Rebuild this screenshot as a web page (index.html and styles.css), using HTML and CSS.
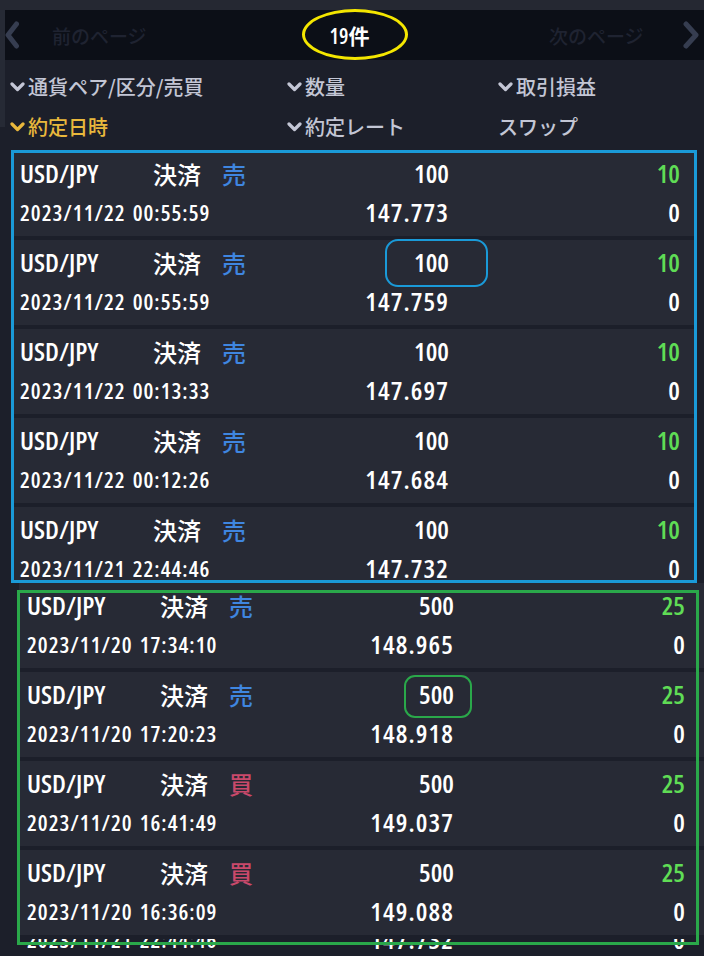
FILE: index.html
```html
<!DOCTYPE html>
<html lang="ja">
<head>
<meta charset="utf-8">
<title>約定履歴</title>
<link rel="stylesheet" href="styles.css">
</head>
<body>
<div class="page">
  <div class="topstrip"></div>
  <nav class="pager">
    <span class="chev"><svg width="14" height="28" viewBox="0 0 14 28"><polyline points="11.5,3 3,14 11.5,25" fill="none" stroke="#363d50" stroke-width="5" stroke-linejoin="round" stroke-linecap="round"/></svg></span>
    <span class="prev">前のページ</span>
    <span class="count">19件</span>
    <span></span>
    <span class="next">次のページ</span>
    <span class="chev"><svg width="18" height="28" viewBox="0 0 18 28"><polyline points="4,3 14,14 4,25" fill="none" stroke="#363d50" stroke-width="5" stroke-linejoin="round" stroke-linecap="round"/></svg></span>
  </nav>

  <div class="heads">
    <div class="h"><svg class="dn" width="15" height="10" viewBox="0 0 15 10"><polyline points="2,2 7.5,7.5 13,2" fill="none" stroke="currentColor" stroke-width="3.2" stroke-linecap="round" stroke-linejoin="round"/></svg>通貨ペア/区分/売買</div>
    <div class="h"><svg class="dn" width="15" height="10" viewBox="0 0 15 10"><polyline points="2,2 7.5,7.5 13,2" fill="none" stroke="currentColor" stroke-width="3.2" stroke-linecap="round" stroke-linejoin="round"/></svg>数量</div>
    <div class="h"><svg class="dn" width="15" height="10" viewBox="0 0 15 10"><polyline points="2,2 7.5,7.5 13,2" fill="none" stroke="currentColor" stroke-width="3.2" stroke-linecap="round" stroke-linejoin="round"/></svg>取引損益</div>
    <div class="h active"><svg class="dn" width="15" height="10" viewBox="0 0 15 10"><polyline points="2,2 7.5,7.5 13,2" fill="none" stroke="currentColor" stroke-width="3.2" stroke-linecap="round" stroke-linejoin="round"/></svg>約定日時</div>
    <div class="h"><svg class="dn" width="15" height="10" viewBox="0 0 15 10"><polyline points="2,2 7.5,7.5 13,2" fill="none" stroke="currentColor" stroke-width="3.2" stroke-linecap="round" stroke-linejoin="round"/></svg>約定レート</div>
    <div class="h">スワップ</div>
  </div>

  <div class="list p1">
    <div class="row">
      <div class="c1"><span class="pair">USD/JPY</span><span class="kind">決済</span></div>
      <div class="c2"><span class="side sell">売</span><span class="num">100</span></div>
      <div class="c3 num pl">10</div>
      <div class="c1 date">2023/11/22 00:55:59</div>
      <div class="c2 num price">147.773</div>
      <div class="c3 num">0</div>
    </div>
    <div class="row">
      <div class="c1"><span class="pair">USD/JPY</span><span class="kind">決済</span></div>
      <div class="c2"><span class="side sell">売</span><span class="num">100</span></div>
      <div class="c3 num pl">10</div>
      <div class="c1 date">2023/11/22 00:55:59</div>
      <div class="c2 num price">147.759</div>
      <div class="c3 num">0</div>
    </div>
    <div class="row">
      <div class="c1"><span class="pair">USD/JPY</span><span class="kind">決済</span></div>
      <div class="c2"><span class="side sell">売</span><span class="num">100</span></div>
      <div class="c3 num pl">10</div>
      <div class="c1 date">2023/11/22 00:13:33</div>
      <div class="c2 num price">147.697</div>
      <div class="c3 num">0</div>
    </div>
    <div class="row">
      <div class="c1"><span class="pair">USD/JPY</span><span class="kind">決済</span></div>
      <div class="c2"><span class="side sell">売</span><span class="num">100</span></div>
      <div class="c3 num pl">10</div>
      <div class="c1 date">2023/11/22 00:12:26</div>
      <div class="c2 num price">147.684</div>
      <div class="c3 num">0</div>
    </div>
    <div class="row">
      <div class="c1"><span class="pair">USD/JPY</span><span class="kind">決済</span></div>
      <div class="c2"><span class="side sell">売</span><span class="num">100</span></div>
      <div class="c3 num pl">10</div>
      <div class="c1 date">2023/11/21 22:44:46</div>
      <div class="c2 num price">147.732</div>
      <div class="c3 num">0</div>
    </div>
  </div>

  <div class="list p2">
    <div class="row">
      <div class="c1"><span class="pair">USD/JPY</span><span class="kind">決済</span></div>
      <div class="c2"><span class="side sell">売</span><span class="num">500</span></div>
      <div class="c3 num pl">25</div>
      <div class="c1 date">2023/11/20 17:34:10</div>
      <div class="c2 num price">148.965</div>
      <div class="c3 num">0</div>
    </div>
    <div class="row">
      <div class="c1"><span class="pair">USD/JPY</span><span class="kind">決済</span></div>
      <div class="c2"><span class="side sell">売</span><span class="num">500</span></div>
      <div class="c3 num pl">25</div>
      <div class="c1 date">2023/11/20 17:20:23</div>
      <div class="c2 num price">148.918</div>
      <div class="c3 num">0</div>
    </div>
    <div class="row">
      <div class="c1"><span class="pair">USD/JPY</span><span class="kind">決済</span></div>
      <div class="c2"><span class="side buy">買</span><span class="num">500</span></div>
      <div class="c3 num pl">25</div>
      <div class="c1 date">2023/11/20 16:41:49</div>
      <div class="c2 num price">149.037</div>
      <div class="c3 num">0</div>
    </div>
    <div class="row">
      <div class="c1"><span class="pair">USD/JPY</span><span class="kind">決済</span></div>
      <div class="c2"><span class="side buy">買</span><span class="num">500</span></div>
      <div class="c3 num pl">25</div>
      <div class="c1 date">2023/11/20 16:36:09</div>
      <div class="c2 num price">149.088</div>
      <div class="c3 num">0</div>
    </div>
  </div>

  <div class="tail">
    <div class="tailrow">
      <div class="c1 date">2023/11/21 22:44:46</div>
      <div class="c2 num price">147.732</div>
      <div class="c3 num">0</div>
    </div>
  </div>

  <div class="mark ellipse"></div>
  <div class="mark boxblue"></div>
  <div class="mark pillblue"></div>
  <div class="mark boxgreen"></div>
  <div class="mark pillgreen"></div>
</div>
</body>
</html>
```

FILE: styles.css
```css
html, body {
  margin: 0;
  padding: 0;
}
body {
  background:
    linear-gradient(#262a35, #262a35) 0 0 / 5px 127px no-repeat,
    #1c1f2a;
  width: 704px;
  height: 956px;
  overflow: hidden;
  font-family: "Noto Sans CJK JP", sans-serif;
}
.page {
  position: relative;
  width: 704px;
  height: 956px;
  overflow: hidden;
}
.topstrip {
  height: 10px;
  background: #252832;
}

/* pager */
.pager {
  margin-left: 5px;
  height: 50px;
  background: #0c0f17;
  display: grid;
  grid-template-columns: 47px 230px 135px 132px 133px 1fr;
  align-items: center;
  font-size: 19px;
}
.chev {
  display: flex;
  align-items: center;
}
.chev svg { display: block; }
.prev, .next {
  color: #1f2331;
  font-weight: 500;
}
.count {
  text-align: center;
  color: #ffffff;
  font-family: "Open Sans", "Noto Sans CJK JP", sans-serif;
  font-stretch: 75%;
  font-size: 21px;
  font-weight: 600;
}

/* column heads */
.heads {
  display: grid;
  grid-template-columns: 277px 211px 1fr;
  grid-auto-rows: 40px;
  padding: 6px 0 5px 10px;
  color: #c3c6d5;
  font-size: 20px;
  font-weight: 500;
}
.h {
  display: flex;
  align-items: center;
  white-space: nowrap;
}
.h .dn {
  display: block;
  margin-right: 3px;
  margin-top: 1px;
}
.h.active {
  color: #e9b83c;
}

/* list */
.list {
  display: flex;
  flex-direction: column;
  gap: 4px;
  overflow: hidden;
}
.list.p1 {
  margin-left: 12px;
  width: 685px;
  height: 432px;
}
.list.p2 {
  margin-left: 19px;
  width: 685px;
  height: 352px;
}
.row, .tailrow {
  box-sizing: border-box;
  flex: 0 0 85px;
  height: 85px;
  background: #272a35;
  display: grid;
  grid-template-columns: 202px 227px 1fr;
  grid-template-rows: 44px 34px;
  align-content: start;
  padding: 0 17px 0 8px;
  color: #ffffff;
  font-family: "Open Sans", "Noto Sans CJK JP", sans-serif;
  font-stretch: 75%;
  font-weight: 600;
  white-space: nowrap;
}
.p2 .row {
  grid-template-columns: 202px 225px 1fr;
  padding: 0 19px 0 8px;
}
.c1, .c2, .c3 {
  display: flex;
  align-items: center;
}
.c2 { justify-content: space-between; }
.c3 { justify-content: flex-end; }
.c2.price { justify-content: flex-end; }

.pair {
  display: inline-block;
  width: 133px;
  font-size: 26px;
}
.kind {
  font-family: "Noto Sans CJK JP", sans-serif;
  font-size: 24px;
  font-weight: 500;
}
.side {
  font-family: "Noto Sans CJK JP", sans-serif;
  font-size: 24px;
  font-weight: 500;
}
.side.sell { color: #3f86e0; }
.side.buy { color: #c9496b; }
.num {
  font-size: 26px;
}
.pl { color: #5fdc55; }
.date {
  font-size: 22px;
  letter-spacing: 1px;
  word-spacing: 2px;
}
.price {
  letter-spacing: 1.1px;
}

/* clipped fragment of the next screen */
.tail {
  margin-top: 4px;
  height: 17px;
  overflow: hidden;
}
.tailrow {
  margin-left: 19px;
  width: 685px;
  height: 17px;
  grid-template-rows: 17px;
  grid-template-columns: 202px 225px 1fr;
  padding: 0 19px 0 8px;
  margin-top: -8px;
  line-height: 17px;
  background: transparent;
}

/* annotations drawn over the screenshot */
.mark {
  position: absolute;
  box-sizing: border-box;
  pointer-events: none;
}
.ellipse {
  left: 302px;
  top: 9px;
  width: 106px;
  height: 51px;
  border: 3px solid #f4e600;
  border-radius: 50%;
}
.boxblue {
  left: 11px;
  top: 150px;
  width: 686px;
  height: 433px;
  border: 3px solid #1a9ad8;
}
.pillblue {
  left: 385px;
  top: 239px;
  width: 103px;
  height: 48px;
  border: 2px solid #1a9ad8;
  border-radius: 13px;
}
.boxgreen {
  left: 17px;
  top: 590px;
  width: 682px;
  height: 355px;
  border: 3px solid #2aa84a;
}
.pillgreen {
  left: 404px;
  top: 675px;
  width: 68px;
  height: 43px;
  border: 2px solid #2aa84a;
  border-radius: 11px;
}
```
